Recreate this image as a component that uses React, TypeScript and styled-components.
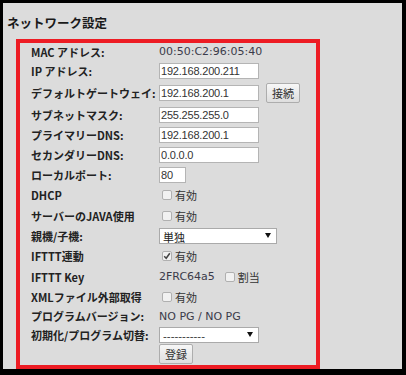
import { FC, ReactNode } from 'react';
import styled, { createGlobalStyle } from 'styled-components';

const GlobalStyle = createGlobalStyle`
  html, body {
    margin: 0;
    padding: 0;
    background: #dcdcdc;
  }
`;

const Frame = styled.div`
  width: 406px;
  height: 375px;
  box-sizing: border-box;
  border-style: solid;
  border-color: #000;
  border-width: 3px 4px 6px 3px;
  background: #dcdcdc;
  display: flex;
  flex-direction: column;
  overflow: hidden;
`;

const Title = styled.h2`
  margin: 0;
  height: 36px;
  box-sizing: border-box;
  padding: 3px 0 0 4px;
  display: flex;
  align-items: center;
  font: 700 12.5px 'Noto Sans CJK JP', sans-serif;
  color: #1a1a1a;
`;

const Panel = styled.div`
  margin-left: 13px;
  width: 304px;
  flex: 1;
  box-sizing: border-box;
  border: 4px solid #ed1c24;
  padding: 0 0 1px 11px;
`;

const Row = styled.div<{ $h: number }>`
  display: grid;
  grid-template-columns: 128px auto;
  align-items: center;
  height: ${(p) => p.$h}px;
`;

const Label = styled.span`
  font: 700 11px 'Noto Sans CJK JP', sans-serif;
  color: #222;
  white-space: nowrap;
`;

const Field = styled.div`
  display: flex;
  align-items: center;
  gap: 7px;
`;

const Value = styled.span`
  font: 11px 'DejaVu Sans', sans-serif;
  color: #3b3b4a;
  white-space: nowrap;
`;

const TextInput = styled.input<{ $w: number }>`
  width: ${(p) => p.$w}px;
  height: 16px;
  box-sizing: border-box;
  border: 1px solid #b4b4b4;
  padding: 0 1px;
  margin: 0;
  background: #fff;
  font: 11px 'Liberation Sans', sans-serif;
  letter-spacing: -0.2px;
  color: #333;
  outline: none;
`;

const Button = styled.button`
  width: 34px;
  height: 20px;
  box-sizing: border-box;
  margin: 0;
  padding: 0;
  border: 1px solid #adadad;
  border-radius: 2px;
  background: linear-gradient(#f7f7f7, #dedede);
  font: 11px 'Noto Sans CJK JP', sans-serif;
  color: #333;
`;

const SelectWrap = styled.div<{ $w: number }>`
  position: relative;
  width: ${(p) => p.$w}px;
  height: 16px;
`;

const Select = styled.select`
  appearance: none;
  width: 100%;
  height: 100%;
  box-sizing: border-box;
  margin: 0;
  border: 1px solid #aaa;
  border-radius: 0;
  padding: 0 0 0 3px;
  background: #fff;
  font: 11px 'Noto Sans CJK JP', sans-serif;
  color: #222;
  outline: none;
`;

const Arrow = styled.svg`
  position: absolute;
  right: 6px;
  top: 5px;
  pointer-events: none;
`;

const CheckLabel = styled.label`
  display: inline-flex;
  align-items: center;
  gap: 3px;
  margin-left: 3px;
  font: 11px 'Noto Sans CJK JP', sans-serif;
  color: #333;
`;

const Box = styled.span`
  width: 10px;
  height: 10px;
  box-sizing: border-box;
  border: 1px solid #b0b0b0;
  border-radius: 2px;
  background: #f1f1f1;
  display: inline-flex;
  align-items: center;
  justify-content: center;
`;

const Check: FC<{ checked?: boolean; children: ReactNode }> = ({ checked, children }) => (
  <CheckLabel>
    <Box>
      {checked && (
        <svg width="8" height="8" viewBox="0 0 8 8">
          <path d="M1.2 4.3 L3.2 6.3 L6.8 1.2" fill="none" stroke="#444" strokeWidth="1.5" />
        </svg>
      )}
    </Box>
    {children}
  </CheckLabel>
);

const DropDown: FC<{ w: number; value: string }> = ({ w, value }) => (
  <SelectWrap $w={w}>
    <Select defaultValue={value}>
      <option>{value}</option>
    </Select>
    <Arrow width="6" height="6" viewBox="0 0 6 6">
      <path d="M0 0 H6 L3 5 Z" fill="#111" />
    </Arrow>
  </SelectWrap>
);

export default function App() {
  return (
    <>
      <GlobalStyle />
      <Frame>
        <Title>ネットワーク設定</Title>
        <Panel>
          <Row $h={17}>
            <Label>MAC アドレス:</Label>
            <Value>00:50:C2:96:05:40</Value>
          </Row>
          <Row $h={22}>
            <Label>IP アドレス:</Label>
            <Field><TextInput $w={100} defaultValue="192.168.200.211" /></Field>
          </Row>
          <Row $h={22}>
            <Label>デフォルトゲートウェイ:</Label>
            <Field>
              <TextInput $w={100} defaultValue="192.168.200.1" />
              <Button>接続</Button>
            </Field>
          </Row>
          <Row $h={21}>
            <Label>サブネットマスク:</Label>
            <Field><TextInput $w={100} defaultValue="255.255.255.0" /></Field>
          </Row>
          <Row $h={20}>
            <Label>プライマリーDNS:</Label>
            <Field><TextInput $w={100} defaultValue="192.168.200.1" /></Field>
          </Row>
          <Row $h={20}>
            <Label>セカンダリーDNS:</Label>
            <Field><TextInput $w={100} defaultValue="0.0.0.0" /></Field>
          </Row>
          <Row $h={20}>
            <Label>ローカルポート:</Label>
            <Field><TextInput $w={27} defaultValue="80" /></Field>
          </Row>
          <Row $h={20}>
            <Label>DHCP</Label>
            <Field><Check>有効</Check></Field>
          </Row>
          <Row $h={21}>
            <Label>サーバーのJAVA使用</Label>
            <Field><Check>有効</Check></Field>
          </Row>
          <Row $h={20}>
            <Label>親機/子機:</Label>
            <Field><DropDown w={118} value="単独" /></Field>
          </Row>
          <Row $h={20}>
            <Label>IFTTT連動</Label>
            <Field><Check checked>有効</Check></Field>
          </Row>
          <Row $h={21}>
            <Label>IFTTT Key</Label>
            <Field>
              <Value>2FRC64a5</Value>
              <Check>割当</Check>
            </Field>
          </Row>
          <Row $h={20}>
            <Label>XMLファイル外部取得</Label>
            <Field><Check>有効</Check></Field>
          </Row>
          <Row $h={18}>
            <Label>プログラムバージョン:</Label>
            <Value>NO PG / NO PG</Value>
          </Row>
          <Row $h={19}>
            <Label>初期化/プログラム切替:</Label>
            <Field><DropDown w={100} value="-----------" /></Field>
          </Row>
          <Row $h={20}>
            <span />
            <Field><Button>登録</Button></Field>
          </Row>
        </Panel>
      </Frame>
    </>
  );
}
